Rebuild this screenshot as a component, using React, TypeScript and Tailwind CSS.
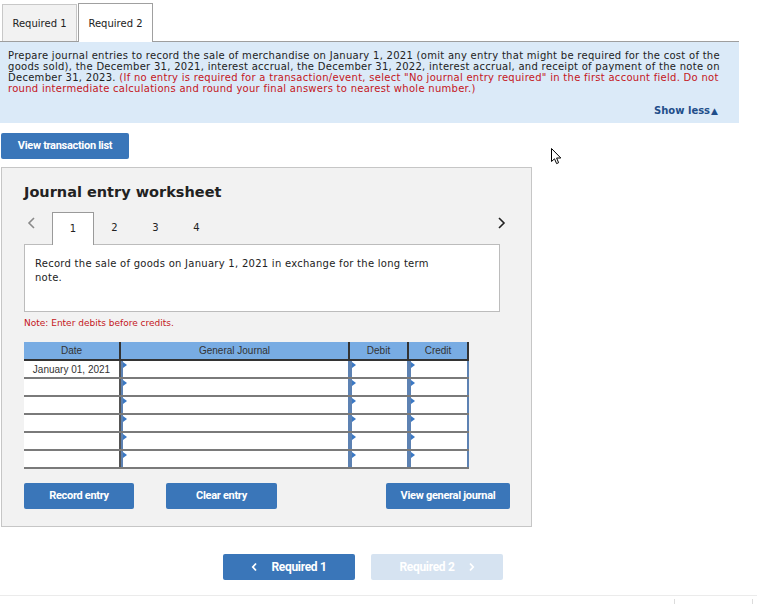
import React from 'react';

const verdana = { fontFamily: '"DejaVu Sans", Verdana, sans-serif' };
const arial = { fontFamily: '"Liberation Sans", Arial, sans-serif' };
const roboto = { fontFamily: 'Roboto, "Liberation Sans", sans-serif' };

function BlueButton({ label, className = '' }: { label: string; className?: string }) {
  return (
    <button
      className={`h-[26px] rounded-[2px] bg-[#3a76b9] text-white text-[11px] font-bold tracking-[-0.3px] ${className}`}
      style={roboto}
    >
      {label}
    </button>
  );
}

function InputCell({ width }: { width: string }) {
  return (
    <div className={`relative h-full ${width} border-x-2 border-[#5d82b3] bg-white`}>
      <span className="absolute left-0 top-[1px] w-0 h-0 border-y-[3px] border-y-transparent border-l-[4px] border-l-[#3a78c4]" />
    </div>
  );
}

function JournalRow({ date }: { date?: string }) {
  return (
    <div className="flex h-[18px] border-b-2 border-[#7a7a7a]">
      <div
        className="w-[97px] flex items-center justify-center bg-white text-[10px] text-[#333] border-r-2 border-[#555]"
        style={arial}
      >
        {date}
      </div>
      <InputCell width="w-[229px]" />
      <InputCell width="w-[59px]" />
      <InputCell width="w-[60px]" />
    </div>
  );
}

export default function App() {
  return (
    <div className="relative w-[757px] h-[604px] overflow-hidden bg-white text-[#222]" style={verdana}>
      {/* Part tabs */}
      <div className="flex items-end pt-[3px] pl-[2px] h-[41px]">
        <div className="w-[75px] h-[37px] flex items-center justify-center bg-[#f2f2f2] border border-[#c8c8c8] border-b-0 text-[10px]">
          Required 1
        </div>
        <div className="relative z-10 ml-px w-[75px] h-[39px] mb-[-1px] flex items-center justify-center bg-white border border-[#a0a0a0] border-b-0 text-[10px]">
          Required 2
        </div>
      </div>

      {/* Instructions */}
      <div className="w-[739px] h-[82px] bg-[#dbeaf8] border-t border-[#9e9e9e] pl-2 pr-2 pt-[8px] flex flex-col">
        <p className="text-[10px] leading-[11px] tracking-[0.28px] text-[#222] whitespace-nowrap">
          Prepare journal entries to record the sale of merchandise on January 1, 2021 (omit any entry that might be required for the cost of the
          <br />
          goods sold), the December 31, 2021, interest accrual, the December 31, 2022, interest accrual, and receipt of payment of the note on
          <br />
          December 31, 2023.{' '}
          <span className="text-[#c4161c]">
            (If no entry is required for a transaction/event, select "No journal entry required" in the first account field. Do not
            <br />
            round intermediate calculations and round your final answers to nearest whole number.)
          </span>
        </p>
        <div className="mt-auto mb-[5px] self-end pr-[13px] text-[10px] font-bold text-[#1f4e8a]">
          Show less<span className="text-[9px] ml-[1px]">▲</span>
        </div>
      </div>

      <BlueButton label="View transaction list" className="ml-px mt-[10px] w-[128px] h-[25px]" />

      {/* Worksheet */}
      <div className="ml-px mt-[8px] w-[531px] h-[360px] bg-[#f2f2f2] border border-[#c6c6c6] pl-[22px] pt-[14px]">
        <h2 className="text-[14.5px] font-bold text-[#222] leading-[20px]">Journal entry worksheet</h2>

        <div className="mt-[10px] flex items-end h-[32px] w-[476px]">
          <svg width="12" height="14" viewBox="0 0 12 14" className="mb-[14px] ml-[2px]">
            <path d="M8 2 L3 7 L8 12" fill="none" stroke="#8a8a8a" strokeWidth="1.6" />
          </svg>
          <div className="relative z-10 ml-[14px] mb-[-1px] w-[42px] h-[33px] bg-white border border-[#9a9a9a] border-b-0 flex items-center justify-center text-[10px] pb-[2px]">
            1
          </div>
          <div className="w-[41px] h-[32px] flex items-center justify-center text-[10px] pb-[2px]">2</div>
          <div className="w-[41px] h-[32px] flex items-center justify-center text-[10px] pb-[2px]">3</div>
          <div className="w-[41px] h-[32px] flex items-center justify-center text-[10px] pb-[2px]">4</div>
          <svg width="12" height="14" viewBox="0 0 12 14" className="ml-auto mb-[14px] mr-[-7px]">
            <path d="M4 2 L9 7 L4 12" fill="none" stroke="#222" strokeWidth="1.6" />
          </svg>
        </div>

        <div className="w-[476px] h-[68px] bg-white border border-[#bcbcbc] pl-[10px] pt-[12px] text-[10px] leading-[14px] tracking-[0.27px]">
          Record the sale of goods on January 1, 2021 in exchange for the long term
          <br />
          note.
        </div>

        <p className="mt-[5px] text-[9px] leading-[12px] text-[#c4161c]">Note: Enter debits before credits.</p>

        {/* Journal table */}
        <div className="mt-[13px] w-[445px]">
          <div className="flex h-[19px] bg-[#78ace3] text-[10px] text-[#333] border-b-2 border-[#333]" style={arial}>
            <div className="w-[97px] flex items-center justify-center border-r-2 border-[#333]">Date</div>
            <div className="w-[229px] flex items-center justify-center border-r-2 border-[#333]">General Journal</div>
            <div className="w-[59px] flex items-center justify-center border-r-2 border-[#333]">Debit</div>
            <div className="w-[60px] flex items-center justify-center border-r-2 border-[#333]">Credit</div>
          </div>
          <JournalRow date="January 01, 2021" />
          <JournalRow />
          <JournalRow />
          <JournalRow />
          <JournalRow />
          <JournalRow />
        </div>

        <div className="mt-[14px] flex w-[486px]">
          <BlueButton label="Record entry" className="w-[110px]" />
          <BlueButton label="Clear entry" className="ml-[32px] w-[111px]" />
          <BlueButton label="View general journal" className="ml-auto w-[124px]" />
        </div>
      </div>

      {/* Bottom navigation */}
      <div className="mt-[27px] flex gap-[16px] pl-[223px]">
        <button
          className="w-[132px] h-[26px] rounded-[2px] bg-[#3a76b9] text-white text-[12px] font-bold tracking-[-0.3px] flex items-center justify-center gap-[13px]"
          style={roboto}
        >
          <svg width="7" height="10" viewBox="0 0 7 10">
            <path d="M5 1.5 L1.8 5 L5 8.5" fill="none" stroke="white" strokeWidth="1.8" />
          </svg>
          Required 1
        </button>
        <button
          className="w-[132px] h-[26px] rounded-[2px] bg-[#d6e3f1] text-white text-[12px] font-bold tracking-[-0.3px] flex items-center justify-center gap-[13px]"
          style={roboto}
        >
          Required 2
          <svg width="7" height="10" viewBox="0 0 7 10">
            <path d="M2 1.5 L5.2 5 L2 8.5" fill="none" stroke="white" strokeWidth="1.8" />
          </svg>
        </button>
      </div>

      <div className="mt-[15px] h-px w-full bg-[#ebebeb]" />
      <div className="flex h-[8px] pl-[674px] pt-[3px]">
        <div className="w-px h-full bg-[#dcdcdc]" />
        <div className="ml-[77px] w-px h-full bg-[#dcdcdc]" />
      </div>

      {/* Mouse cursor */}
      <svg className="absolute left-[551px] top-[148px]" width="12" height="18" viewBox="0 0 12 18">
        <path
          d="M0.5 0.5 L0.5 13.5 L3.5 10.8 L5.6 15.6 L7.6 14.7 L5.6 10 L9.8 10 Z"
          fill="white"
          stroke="black"
          strokeWidth="1"
          strokeLinejoin="miter"
        />
      </svg>
    </div>
  );
}
